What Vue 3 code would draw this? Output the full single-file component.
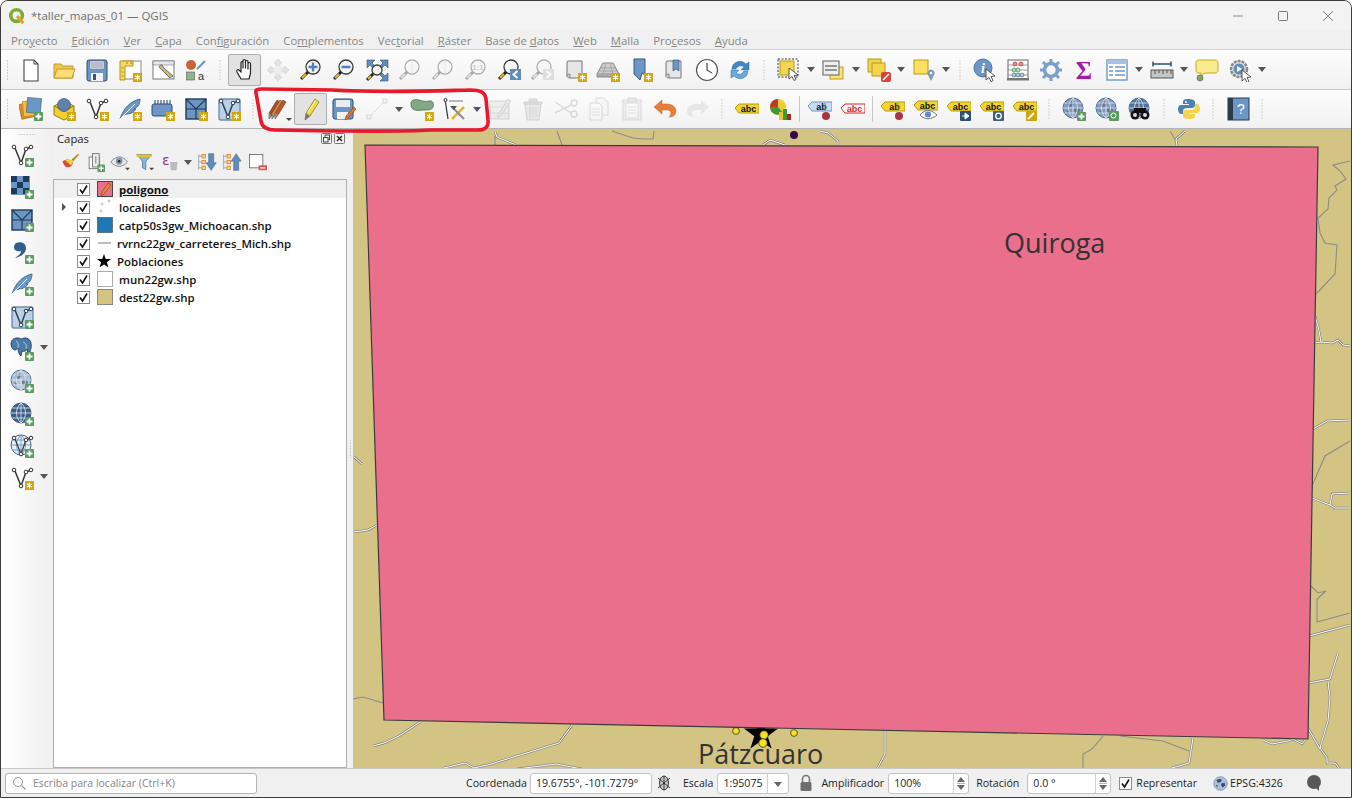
<script setup>
const plus = '<rect x="15" y="15" width="9" height="9" rx="1" fill="#5b9b60"/><path d="M19.5 16.5v6M16.5 19.5h6" stroke="#fff" stroke-width="1.8"/>'
const star = '<rect x="15" y="15" width="9" height="9" fill="#d2a60e"/><path d="M19.5 16.5v6M17 18l5 3M22 18l-5 3" stroke="#fff" stroke-width="1.1"/>'
const glass = (inner = '') => `<circle cx="14" cy="9" r="7" fill="#f5f5f5" stroke="#3a3a3a" stroke-width="1.3"/><path d="M9 14L2 21" stroke="#222" stroke-width="3"/><path d="M7 16l-4 4" stroke="#f0c020" stroke-width="1.8"/>${inner}`
const vee = (c = '#333') => `<path d="M5 5l6 15 5-14 5-2" fill="none" stroke="${c}" stroke-width="1.5"/><circle cx="4" cy="4" r="1.8" fill="#fff" stroke="${c}"/><circle cx="11" cy="20" r="1.8" fill="#fff" stroke="${c}"/><circle cx="16" cy="6" r="1.8" fill="#fff" stroke="${c}"/><circle cx="21" cy="4" r="1.8" fill="#fff" stroke="${c}"/>`
const feather = '<path d="M2 22C5 12 12 4 22 2c0 6-3 9-6 10l2 0c-2 3-5 5-9 5l-3 1z" fill="#6a98c8" stroke="#3c5f86" stroke-width=".8"/><path d="M2 22L17 7" stroke="#fff" stroke-width=".9"/>'
const mesh = '<rect x="2" y="2" width="20" height="20" fill="#6d95c2" stroke="#203a57" stroke-width="1.4"/><path d="M2 2l10 10L22 2M2 12h20M12 12v10" stroke="#203a57" stroke-width="1.2" fill="none"/>'
const vmesh = '<rect x="2" y="2" width="21" height="21" rx="2" fill="#bcd0e6" stroke="#6d8fb3" stroke-width="1.4"/>' + vee('#2c3e50')
const globe = (fill = '#7a9cc6', line = '#fff') => `<circle cx="11" cy="11" r="10" fill="${fill}" stroke="#445e7e"/><path d="M1 11h20M2.5 6h17M2.5 16h17M11 1v20M11 1c-6 5-6 15 0 20M11 1c6 5 6 15 0 20" fill="none" stroke="${line}" stroke-width=".9"/>`
const worldGlobe = '<circle cx="11" cy="11" r="10" fill="#a9c0dc" stroke="#6c89ac"/><path d="M5 6l5-2 3 2-2 3-4 1zM12 11l5-1 1 4-4 3-2-3zM4 13l3 1-1 3z" fill="#3e4d60"/>'
const gridGlobe = (fill) => `<circle cx="11" cy="11" r="10" fill="${fill}" stroke="#55708f"/><path d="M5 6l5-2 3 2-2 3-4 1zM12 11l5-1 1 4-4 3-2-3zM4 13l3 1-1 3z" fill="#667" opacity=".75"/><path d="M1 11h20M2.5 6h17M2.5 16h17M11 1v20M11 1c-6 5-6 15 0 20M11 1c6 5 6 15 0 20" fill="none" stroke="#dfe7f0" stroke-width=".8"/>`
const scroll = '<path d="M5 3h14v17H7c-2 0-3-1-3-2V4z" fill="#e6e6e6" stroke="#777"/><path d="M4 18c0-2 2-2 3-2h0v4" fill="#ccc" stroke="#777" stroke-width=".8"/>'
const abc = (c = '#f2d531', s = '#b99a0c', t = 'abc', tc = '#111') => `<path d="M0 7l4-4h20v9H4z" fill="${c}" stroke="${s}"/><text x="13.5" y="10.8" font-family="Liberation Sans" font-size="9" font-weight="700" text-anchor="middle" fill="${tc}">${t}</text>`
const labelTool = (corner) => `<g transform="translate(0 2)">${abc()}</g>${corner}`
const cursor = (x, y) => `<path transform="translate(${x} ${y})" d="M0 0l0 11 3-2.5 2 4 2-1-2-4 4-.5z" fill="#fff" stroke="#333" stroke-width=".8"/>`
const bigV = vee()
const handPath = '<path d="M8 21l-4-7c-1-2 1-3 2-2l2 2V5c0-2 2-2 2 0v5V3c0-2 2.500-2 2.500 0v7V4c0-2 2.500-2 2.500 0v7V6c0-2 2.500-2 2.500 0v9l-1.500 6z" fill="#fff" stroke="#222" stroke-width="1.200" stroke-linejoin="round"/>'
const fanPencil = (dx, c) => `<g transform="translate(${dx} 0)"><path d="M2 22l0-6L10 3l3 2-8 13z" fill="${c}" stroke="#5c3a24" stroke-width=".6"/><path d="M2 22l0-6 3 2z" fill="#8a8a8a"/></g>`

const icons = {
  new: '<path d="M5 2h10l4 4v17H5z" fill="#fff" stroke="#444" stroke-width="1.100"/><path d="M15 2v4h4" fill="none" stroke="#444"/>',
  open: '<path d="M2 6h7l2 2h10v12H2z" fill="#f0c54c" stroke="#c39a2b"/><path d="M2 20l3-9h18l-3 9z" fill="#fbdc76" stroke="#c39a2b"/>',
  save: '<rect x="2" y="2" width="20" height="21" rx="2" fill="#6c96c5" stroke="#2f4c6e"/><rect x="5" y="3" width="14" height="8" fill="#e8edf3" stroke="#5a6f88" stroke-width=".5"/><path d="M6 5h12M6 7h12M6 9h12" stroke="#667" stroke-width=".7"/><rect x="6" y="15" width="12" height="8" fill="#f2f2f2"/><rect x="8" y="16" width="3" height="6" fill="#3b5777"/>',
  template: '<rect x="5" y="3" width="18" height="18" fill="#fff" stroke="#888"/><path d="M2 3h13v5H7v14H2z" fill="#f4d866" stroke="#b3950f"/><path d="M3.500 10h2M3.500 14h2M3.500 18h2M9 4v2M13 4v2" stroke="#8a7208" stroke-width=".8"/>' + star,
  props: '<rect x="2" y="3" width="21" height="18" fill="#fff" stroke="#777"/><path d="M2 3h21v4H2z" fill="#dfe7f0" stroke="#777" stroke-width=".6"/><path d="M8 9l3 3 8 8 3-2-9-8-2-3c-2 0-3 1-3 2z" fill="#c9b878" stroke="#555" stroke-width=".8"/>',
  style: '<circle cx="7" cy="7" r="5" fill="#c8643a"/><path d="M13 11L21 3" stroke="#6d95c2" stroke-width="2"/><rect x="2.500" y="14" width="8" height="8" fill="#8eb58e" stroke="#555" stroke-width=".6"/><text x="17" y="22" font-family="Liberation Sans" font-size="11" fill="#333" text-anchor="middle">a</text>',
  hand: handPath,
  pan: '<path d="M12 1l4 4h-2v4h-4V5H8zM12 23l-4-4h2v-4h4v4h2zM1 12l4-4v2h4v4H5v2zM23 12l-4 4v-2h-4v-4h4V8z" fill="#bcc8d4" stroke="#888" stroke-width=".6"/><rect x="8" y="8" width="8" height="8" fill="#e0e0e0"/>',
  zoomIn: glass('<path d="M9.500 9h9M14 4.500v9" stroke="#4f81bd" stroke-width="2.400"/>'),
  zoomOut: glass('<path d="M9.500 9h9" stroke="#4f81bd" stroke-width="2.400"/>'),
  zoomFull: '<path d="M2 2h8L7 5l3 3-2 2-3-3-3 3zM23 2h-8l3 3-3 3 2 2 3-3 3 3zM23 23h-8l3-3-3-3 2-2 3 3 3-3zM5 18L8 15" fill="#5f8dbd" stroke="#34567a" stroke-width=".6"/>' + glass('').replace('cx="14" cy="9" r="7"', 'cx="12" cy="12" r="5"').replace('M9 14L2 21', 'M8 16L2 22').replace('M7 16l-4 4', 'M6 18l-3 3'),
  zoomFade: glass('<path d="M14 2v14" stroke="#ccc"/>'),
  zoomNative: glass('<text x="14" y="12" font-family="Liberation Sans" font-size="8" font-weight="700" fill="#777" text-anchor="middle">1:1</text>'),
  zoomLast: glass() + '<rect x="13" y="11" width="11" height="11" fill="#5f8dbd"/><path d="M20.500 13l-4 3.500 4 3.500" fill="none" stroke="#fff" stroke-width="2"/>',
  zoomNext: glass() + '<rect x="13" y="11" width="11" height="11" fill="#bbb"/><path d="M16.500 13l4 3.500-4 3.500" fill="none" stroke="#fff" stroke-width="2"/>',
  newMap: scroll + star,
  map3d: '<path d="M7 5h10l6 11H1z" fill="#ccc" stroke="#888"/><path d="M5 10h15M3 13h18M10 5l-3 11M14 5l3 11" stroke="#999" stroke-width=".7"/><path d="M1 16v3h22v-3" fill="#aaa" stroke="#888"/>' + star,
  newBook: '<path d="M5 1h11v16l-3-2-2 7-6-6z" fill="#6c96c5" stroke="#39597c"/>' + star,
  showBook: scroll + '<path d="M11 2h6v11l-3-2-3 2z" fill="#6c96c5" stroke="#39597c" stroke-width=".7"/>',
  clock: '<circle cx="12" cy="12" r="10.500" fill="#fff" stroke="#555" stroke-width="1.200"/><path d="M12 5v7l5 3" fill="none" stroke="#555" stroke-width="1.300"/>',
  refresh: '<path d="M4 11a8 8 0 0 1 14-5l3-2v8h-8l3-3a5 5 0 0 0-8 2z" fill="#3f88c9" stroke="#2a6a9f" stroke-width=".5"/><path d="M20 13a8 8 0 0 1-14 5l-3 2v-8h8l-3 3a5 5 0 0 0 8-2z" fill="#6ca9dc" stroke="#2a6a9f" stroke-width=".5"/>',
  select: '<rect x="1" y="1" width="20" height="18" fill="none" stroke="#333" stroke-dasharray="2 1.500"/><rect x="3" y="3" width="14" height="14" fill="#f4d64e" stroke="#b79a10"/>' + cursor(12, 10),
  selValues: '<rect x="8" y="9" width="13" height="12" fill="#f9e27a" stroke="#bb9e1c"/><rect x="1" y="3" width="16" height="14" fill="#eee" stroke="#777" stroke-width="1.200"/><path d="M3 8h12M3 12h12" stroke="#777" stroke-width="1.300"/>',
  deselect: '<rect x="1" y="1" width="13" height="13" fill="#f4d64e" stroke="#b79a10"/><rect x="5" y="5" width="13" height="13" fill="#f4d64e" stroke="#b79a10"/><rect x="14" y="14" width="10" height="10" rx="2" fill="#d8433d"/><path d="M16 22l6-6" stroke="#fff" stroke-width="1.500"/>',
  selLoc: '<rect x="2" y="2" width="14" height="14" fill="#fbe25c" stroke="#b79a10"/><path d="M19 23l-3-6a3.500 3.500 0 1 1 6 0z" fill="#7e9eb3"/><circle cx="19" cy="15" r="1.200" fill="#fff"/>',
  identify: '<circle cx="10" cy="10" r="9" fill="#6c96c5" stroke="#4e759f"/><text x="10" y="15" font-family="Liberation Serif" font-size="14" font-weight="700" font-style="italic" fill="#fff" text-anchor="middle">i</text>' + cursor(13, 11),
  abacus: '<rect x="2" y="2" width="20" height="19" fill="#fff" stroke="#666"/><path d="M2 7h20M2 12h20M2 17h20" stroke="#888" stroke-width=".8"/><rect x="1" y="20" width="22" height="2.500" fill="#777"/><g fill="#e88" stroke="#b33" stroke-width=".7"><circle cx="9" cy="6" r="2"/><circle cx="15" cy="6" r="2"/></g><g fill="#ade0ad" stroke="#484" stroke-width=".7"><circle cx="8" cy="12" r="2"/><circle cx="12" cy="12" r="2"/></g><g fill="#bcd" stroke="#468" stroke-width=".7"><circle cx="8" cy="17" r="2"/><circle cx="12" cy="17" r="2"/><circle cx="16" cy="17" r="2"/></g>',
  gear: '<circle cx="12" cy="12" r="6.500" fill="none" stroke="#7ba0cc" stroke-width="3.600"/><path d="M12 1v5M12 18v5M1 12h5M18 12h5M4 4l4 4M16 16l4 4M20 4l-4 4M8 16l-4 4" stroke="#7ba0cc" stroke-width="3"/>',
  sigma: '<text x="12" y="20.500" font-family="Liberation Serif" font-size="25" font-weight="700" fill="#a21aa5" text-anchor="middle">Σ</text>',
  table: '<rect x="2" y="2" width="20" height="20" fill="#fff" stroke="#6c96c5" stroke-width="1.400"/><rect x="2" y="2" width="20" height="4" fill="#a8c3e2"/><path d="M4 9h4M10 9h10M4 13h4M10 13h10M4 17h4M10 17h10" stroke="#6c96c5" stroke-width="1.500"/>',
  ruler: '<path d="M3 6h18M3 3.500v5M21 3.500v5" stroke="#2d4f73" stroke-width="1.500" fill="none"/><rect x="1" y="12" width="22" height="8" fill="#c4c4c4" stroke="#555"/><path d="M5 12v4M9 12v3M13 12v4M17 12v3M21 12v4" stroke="#555"/>',
  callout: '<path d="M4 2h16c2 0 3 1 3 3v7c0 2-1 3-3 3H10l-4 3v-3H4c-2 0-3-1-3-3V5c0-2 1-3 3-3z" fill="#fbe98f" stroke="#c9a916"/><circle cx="5" cy="20" r="3" fill="#7ea860" stroke="#555" stroke-width=".6"/>',
  gearPlay: '<circle cx="11" cy="11" r="8" fill="#ddd" stroke="#888" stroke-dasharray="3 1" stroke-width="2.500"/><circle cx="11" cy="11" r="5.500" fill="#5f8dbd"/><path d="M9 8l5 3-5 3z" fill="#fff"/>' + cursor(14, 12),

  dataSource: '<rect x="1" y="6" width="14" height="15" fill="#e0862f" transform="rotate(-12 8 13)" stroke="#a35c14" stroke-width=".6"/><rect x="4" y="4" width="14" height="15" fill="#f1c232" transform="rotate(-5 10 11)" stroke="#b08a12" stroke-width=".6"/><rect x="8" y="1" width="14" height="15" fill="#6c96c5" transform="rotate(5 15 8)" stroke="#3c5f86" stroke-width=".6"/>' + plus,
  newGeo: '<path d="M2 9l10-5 10 5v9l-10 5-10-5z" fill="#f2cf2f" stroke="#8e7a10"/><path d="M2 9l10 5 10-5" fill="none" stroke="#8e7a10"/><circle cx="12" cy="8" r="6.500" fill="#5f82ad" stroke="#2e4768" stroke-width=".6"/>' + star,
  newVec: bigV + star,
  newFeather: feather + star,
  chip: '<rect x="1" y="7" width="20" height="12" rx="2" fill="#6c96c5" stroke="#2f4c6e"/><path d="M4 3v4M7 3v4M10 3v4M13 3v4M16 3v4M19 3v4" stroke="#2f4c6e" stroke-width="1.100"/>' + star,
  newMesh: mesh + star,
  newVmesh: vmesh + star,
  pencils: fanPencil(1, '#a8502e') + fanPencil(4, '#e08a3a') + fanPencil(7, '#c0552a'),
  pencil: '<path d="M6 23l1-7L16 2l4 3-9 14z" fill="#f0d848" stroke="#8e7d20" stroke-width=".8"/><path d="M6 23l1-7 4 3z" fill="#777"/><path d="M9 15l8-12" stroke="#fff6b0" stroke-width=".9"/>',
  saveEdits: '<rect x="1" y="2" width="20" height="20" rx="2" fill="#6c96c5" stroke="#2f4c6e"/><rect x="4" y="3" width="14" height="7" fill="#e8edf3"/><rect x="5" y="15" width="11" height="7" fill="#f2f2f2"/><path d="M13 23l1-4 8-9 2 2-8 9z" fill="#e0762a" stroke="#7a4214" stroke-width=".6"/>',
  digit: '<path d="M4 20L20 4" stroke="#888" stroke-dasharray="2 1.500"/><rect x="2" y="18" width="4" height="4" fill="#eee" stroke="#888" stroke-width=".7"/><rect x="18" y="2" width="4" height="4" fill="#eee" stroke="#888" stroke-width=".7"/>',
  shape: '<path d="M1 6c0-3 4-4 8-3s6 2 10 1 5 3 4 6-5 3-9 3-5 1-9 0-4-4-4-7z" fill="#83a886" stroke="#4d6e50" stroke-width=".8"/>' + star,
  vertex: '<path d="M2 2l3 20" stroke="#333" stroke-width="1.200"/><circle cx="2.500" cy="3" r="1.500" fill="#fff" stroke="#333"/><path d="M6 4h14" stroke="#777" stroke-width="1.200"/><path d="M9 22L21 10" stroke="#e8b52d" stroke-width="2.500"/><path d="M21 22L9 10" stroke="#8a8a8a" stroke-width="2"/><path d="M7 9l7 0-3 4z" fill="#555"/>',
  multi: '<rect x="2" y="4" width="19" height="18" fill="#ddd" stroke="#999"/><path d="M2 10h19M2 16h19" stroke="#aaa"/><path d="M9 20L20 2l3 2-11 16z" fill="#ccc" stroke="#999"/>',
  del: '<path d="M4 7h16l-2 16H6z" fill="#d8cfcf" stroke="#998"/><path d="M3 5h18v2H3zM8 2h8v3H8z" fill="#c4bcbc" stroke="#998"/><path d="M9 10v10M12 10v10M15 10v10" stroke="#a99"/>',
  cut: '<path d="M1 5l16 11M1 16L17 8" stroke="#aaa" stroke-width="1.500"/><circle cx="20" cy="6" r="3" fill="none" stroke="#aaa" stroke-width="1.500"/><circle cx="20" cy="17" r="3" fill="none" stroke="#aaa" stroke-width="1.500"/>',
  copy: '<path d="M9 1h8l4 4v13H9z" fill="#f2f2f2" stroke="#aaa"/><path d="M3 6h9l3 3v14H3z" fill="#f8f8f8" stroke="#aaa"/><path d="M5 12h8M5 15h8M5 18h8" stroke="#bbb"/>',
  paste: '<rect x="3" y="3" width="18" height="20" fill="#ddd" stroke="#aaa"/><rect x="6" y="6" width="12" height="15" fill="#fafafa" stroke="#bbb"/><path d="M8 10h8M8 13h8M8 16h8" stroke="#bbb"/><rect x="8" y="1" width="8" height="4" fill="#ccc" stroke="#aaa"/>',
  undo: '<path d="M9 3L1 10l8 7v-4h5c3 0 4 1.500 4 3s-1 3-2 4c5 0 7-3 7-6 0-4-4-7-9-7H9z" fill="#e57d3b" stroke="#c66322" stroke-width=".5"/>',
  redo: '<path d="M15 3l8 7-8 7v-4h-5c-3 0-4 1.500-4 3s1 3 2 4c-5 0-7-3-7-6 0-4 4-7 9-7h5z" fill="#cdcdcd"/>',
  label: '<g transform="translate(0 4)">' + abc() + '</g>',
  diagram: '<circle cx="10" cy="10" r="8" fill="#e8cf2e"/><path d="M10 10V2a8 8 0 0 0-8 8z" fill="#c0392b"/><path d="M10 10H2a8 8 0 0 0 13 6z" fill="#3c9a3c"/><rect x="11" y="15" width="4" height="8" fill="#f1c232"/><rect x="15" y="12" width="4" height="11" fill="#3c9a3c"/><rect x="19" y="17" width="4" height="6" fill="#a52a22"/>',
  abPin: '<g transform="translate(0 2)">' + abc('#c7dcf2', '#6c96c5', 'ab') + '</g><path d="M17 6v8" stroke="#888"/><circle cx="18" cy="19" r="4" fill="#a93442"/>',
  abcRed: '<g transform="translate(0 4)">' + abc('#fff', '#e01f26', 'abc', '#e01f26') + '</g>',
  abPinY: '<g transform="translate(0 2)">' + abc('#f2d531', '#b99a0c', 'ab') + '</g><path d="M17 6v8" stroke="#888"/><circle cx="18" cy="19" r="4" fill="#a93442"/>',
  abcEye: '<g transform="translate(0 1)">' + abc() + '</g><path d="M6 18c5-6 11-6 17 0-6 5-12 5-17 0z" fill="#fff" stroke="#555" stroke-width=".8"/><circle cx="14" cy="17.500" r="3" fill="#5d8dc7"/>',
  abcMove: labelTool('<rect x="13" y="14" width="11" height="10" rx="1" fill="#2d4f73"/><path d="M15 19h4M18 16l4 3-4 3z" fill="#fff" stroke="#fff"/>'),
  abcRotate: labelTool('<rect x="13" y="14" width="11" height="10" rx="1" fill="#3f5f7a"/><circle cx="18.500" cy="19" r="2.800" fill="none" stroke="#fff" stroke-width="1.300"/>'),
  abcEdit: labelTool('<rect x="13" y="14" width="11" height="10" rx="1" fill="#d2a60e"/><path d="M15 22l6-6" stroke="#fff" stroke-width="2"/>'),
  globeAdd: gridGlobe('#7f9cc2') + plus,
  globeFind: gridGlobe('#7f9cc2') + '<rect x="14" y="14" width="10" height="10" rx="1" fill="#5b9b60"/><circle cx="18.500" cy="18.500" r="2.500" fill="none" stroke="#fff"/>',
  globeBino: gridGlobe('#4f74a3') + '<circle cx="7" cy="18" r="4.500" fill="#111"/><circle cx="17" cy="18" r="4.500" fill="#111"/><rect x="6" y="11" width="12" height="5" fill="#111"/><circle cx="7" cy="18" r="2" fill="#ddd"/><circle cx="17" cy="18" r="2" fill="#ddd"/>',
  python: '<path d="M11 2c-4 0-5 1-5 3v2h6v1H4c-2 0-3 2-3 4s1 5 3 5h2v-3c0-2 2-3 4-3h5c2 0 3-1 3-3V5c0-2-3-3-7-3z" fill="#4b82b4"/><path d="M13 22c4 0 5-1 5-3v-2h-6v-1h8c2 0 3-2 3-4s-1-5-3-5h-2v3c0 2-2 3-4 3H9c-2 0-3 1-3 3v3c0 2 3 3 7 3z" fill="#f7d24d"/><circle cx="9" cy="5" r="1" fill="#fff"/>',
  help: '<rect x="2" y="1" width="21" height="22" fill="#6c96c5" stroke="#2a3b4c"/><rect x="2" y="1" width="5" height="22" fill="#2a3b4c"/><text x="15" y="17" font-family="Liberation Sans" font-size="14" fill="#fff" text-anchor="middle">?</text>',

  addVec: bigV + plus,
  addRaster: '<rect x="1" y="1" width="19" height="19" fill="#6c96c5"/><path d="M1 1h6v6H1zM13 1h6v6h-6zM7 7h6v6H7zM1 13h6v6H1zM13 13h6v6h-6z" fill="#1f3a5c"/>' + plus,
  addMesh: mesh + plus,
  addComma: '<path d="M6 3c5-2 10 0 10 5 0 6-6 9-11 10 3-2 6-4 6-7-3 1-7 0-7-4 0-2 1-3 2-4z" fill="#2f5f8a"/>' + plus,
  addFeather: feather + plus,
  addVmesh: vmesh + plus,
  elephant: '<path d="M7 1c-4 0-6 3-6 6s2 6 4 6c1 0 2-1 3-2 0 3 1 7 3 8l1-5c2 1 4 0 5-2l1 5c2 0 2-3 3-6 1-5-1-10-6-10-2 0-3 1-4 1-1-1-2-1-4-1z" fill="#4a7ba8" stroke="#1d3c5a" stroke-width=".9"/><path d="M6 4c2 1 3 3 2 7M13 5c3 1 4 4 3 7" fill="none" stroke="#d6e2ee" stroke-width=".7"/>' + plus,
  addWms: gridGlobe('#a9c0dc') + plus,
  addWmts: globe('#3c5d87', '#d8e2ee') + plus,
  addWfs: globe('#e8f0f8', '#6c96c5') + vee('#333').replace(/stroke-width="1.5"/, 'stroke-width="1.2"') + plus,
  vStar: bigV + star,

  brush: '<path d="M14 9l8-7 1 1-7 8z" fill="#b8860b"/><path d="M3 11c5-3 9-3 13 1-1 5-4 7-9 6-2-2-3-4-4-7z" fill="#d8483c"/><path d="M6 10c3-2 7-2 10 2-1 2-2 3-3 4z" fill="#f0cf30"/>',
  addGroup: '<rect x="5" y="6" width="12" height="14" fill="#fff" stroke="#666"/><rect x="9" y="2" width="8" height="16" fill="#eee" stroke="#666"/><path d="M13 5v9" stroke="#666"/>' + plus,
  eye: '<path d="M1 12c6-8 14-8 20 0-6 7-14 7-20 0z" fill="#e8e8e8" stroke="#777"/><circle cx="11" cy="11" r="4" fill="#7d95ad"/><circle cx="11" cy="11" r="1.500" fill="#222"/><path d="M18 19h6l-3 3z" fill="#444"/>',
  filter: '<path d="M2 3h18l-7 8v10l-4-2v-8z" fill="#89b7d8" stroke="#54799a"/><rect x="2" y="3" width="18" height="3" fill="#e6c32c"/><path d="M17 19h6l-3 3z" fill="#444"/>',
  epsilon: '<text x="7" y="16" font-family="DejaVu Sans" font-size="17" fill="#8a3f8c" text-anchor="middle">ε</text><path d="M12 12h9l-1 10h-7z" fill="#bbb"/>',
  expand: '<path d="M2 3v18M2 5h5M2 12h5M2 19h5" stroke="#999" fill="none"/><rect x="6" y="3" width="4" height="4" fill="#f6d9a0" stroke="#d67e27"/><rect x="6" y="10" width="4" height="4" fill="#f6d9a0" stroke="#d67e27"/><rect x="6" y="17" width="4" height="4" fill="#f6d9a0" stroke="#d67e27"/><path d="M14 2h6v11h3l-6 9-6-9h3z" fill="#5f8dbd" stroke="#34567a" stroke-width=".6"/>',
  collapse: '<path d="M2 3v18M2 5h5M2 12h5M2 19h5" stroke="#999" fill="none"/><rect x="6" y="3" width="4" height="4" fill="#f6d9a0" stroke="#d67e27"/><rect x="6" y="10" width="4" height="4" fill="#f6d9a0" stroke="#d67e27"/><rect x="6" y="17" width="4" height="4" fill="#f6d9a0" stroke="#d67e27"/><path d="M14 22h6V11h3L17 2l-6 9h3z" fill="#5f8dbd" stroke="#34567a" stroke-width=".6"/>',
  remove: '<rect x="3" y="3" width="16" height="16" fill="#fff" stroke="#666"/><rect x="14" y="16" width="10" height="6" rx="1" fill="#d9534f"/><path d="M16 19h6" stroke="#fff" stroke-width="1.500"/>',
}

// | handle, > drop arrow, sep divider, ~ disabled, * checked
const parse = (s) => s.trim().split(/\s+/).map((t) => {
  if (t === '|') return { kind: 'handle' }
  if (t === '>') return { kind: 'arrow' }
  if (t === 'sep') return { kind: 'sep' }
  const off = t[0] === '~'
  const on = t[0] === '*'
  return { kind: 'btn', off, on, name: off || on ? t.slice(1) : t }
})

const row1 = parse('| new open save template props style | *hand ~pan zoomIn zoomOut zoomFull ~zoomFade ~zoomFade ~zoomNative zoomLast ~zoomNext newMap map3d newBook showBook clock refresh | select > selValues > deselect > selLoc > | identify abacus gear sigma table > ruler > callout gearPlay >')
const row2 = parse('| dataSource newGeo newVec newFeather chip newMesh newVmesh | pencils *pencil saveEdits ~digit > shape vertex > ~multi ~del ~cut ~copy ~paste undo ~redo | label diagram sep abPin abcRed sep abPinY abcEye abcMove abcRotate abcEdit | globeAdd globeFind globeBino | python | help |')
const leftBar = ['addVec', 'addRaster', 'addMesh', 'addComma', 'addFeather', 'addVmesh', 'elephant', 'addWms', 'addWmts', 'addWfs', 'vStar']
const panelTools = parse('brush addGroup eye filter epsilon > expand collapse remove')

const menus = [
  ['Pro', 'y', 'ecto'], ['', 'E', 'dición'], ['', 'V', 'er'], ['', 'C', 'apa'], ['Con', 'f', 'iguración'],
  ['Co', 'm', 'plementos'], ['Vec', 't', 'orial'], ['', 'R', 'áster'], ['Base de ', 'd', 'atos'],
  ['', 'W', 'eb'], ['', 'M', 'alla'], ['Pro', 'c', 'esos'], ['', 'A', 'yuda'],
]

const layers = [
  { name: 'poligono', swatch: 'edit', current: true },
  { name: 'localidades', swatch: 'points', expand: true },
  { name: 'catp50s3gw_Michoacan.shp', swatch: 'blue' },
  { name: 'rvrnc22gw_carreteres_Mich.shp', swatch: 'line', narrow: true },
  { name: 'Poblaciones', swatch: 'star', narrow: true },
  { name: 'mun22gw.shp', swatch: 'white' },
  { name: 'dest22gw.shp', swatch: 'sand' },
]

const roads = [
  'M495 131l2 5 19 8', 'M763 144l7-5 15 5', 'M820 130l8 2 10 8v4', 'M1185 130l-9 8 1 7',
  'M1315 315l3 10 3 16-6 1M1321 341l11 1 6-3 5 5 7 1', 'M1313 428l14-8 23-1', 'M1312 497l18 7 5 3h15M1330 504l2-11 18-1',
  'M1309 635l41-11', 'M1338 652l-8 26-22 4M1328 680l2 17-2 23-8 27 7 10v5h8l5 6', 'M1308 727l12 21',
  'M1263 739l9 4 16-3 5-2 9 5 3-4', 'M885 730v23l-8 15', 'M1193 737l-4 25-17 5',
  'M420 721l-21 14-15 7-11 3', 'M572 724l-13 18-68 21-17 4-9-5-21 5', 'M517 768l39-5 26 5',
  'M354 456l8 7', 'M354 531l14-2 9-5',
]
const borders = [
  'M495 135v9', 'M557 130l5 14', 'M612 130l21 7 10 1h10l1-8', 'M1170 130l7 12',
  'M1350 160l-17 4 7 6 6 8-11 7 2 4-8 8-1 11-10 9 2 15 5 10 12 2-2 29-19 20', 'M1312 485l13-30 25-15',
  'M1311 585l7 7 8-2-9 8v23l33-9', 'M1103 735l-11 13-9 5v15', 'M1120 735l43 5 26 10', 'M353 698l10-2 20 6',
]
</script>

<template>
  <div class="window">
    <header class="titlebar">
      <svg class="logo" viewBox="0 0 20 20" width="18" height="18">
        <circle cx="9.500" cy="9.500" r="6.500" fill="none" stroke="#7bae35" stroke-width="4"/>
        <path d="M10 10l7 8" stroke="#e2a32b" stroke-width="3.500"/>
      </svg>
      <span class="title">*taller_mapas_01 — QGIS</span>
      <div class="winctl">
        <svg viewBox="0 0 12 12" width="12" height="12"><path d="M1 6h10" stroke="#888"/></svg>
        <svg viewBox="0 0 12 12" width="12" height="12"><rect x="1.500" y="1.500" width="9" height="9" rx="1" fill="none" stroke="#777"/></svg>
        <svg viewBox="0 0 12 12" width="12" height="12"><path d="M1 1l10 10M11 1L1 11" stroke="#888"/></svg>
      </div>
    </header>

    <nav class="menubar">
      <span v-for="m in menus" :key="m[1] + m[2]">{{ m[0] }}<u>{{ m[1] }}</u>{{ m[2] }}</span>
    </nav>

    <div v-for="(row, r) in [row1, row2]" :key="r" class="toolbar" :class="'row' + r">
      <template v-for="(t, i) in row" :key="i">
        <span v-if="t.kind === 'handle'" class="handle"></span>
        <span v-else-if="t.kind === 'arrow'" class="arrow"></span>
        <span v-else-if="t.kind === 'sep'" class="sep"></span>
        <span v-else class="tool" :class="{ on: t.on, off: t.off }">
          <svg viewBox="0 0 24 24" width="24" height="24" v-html="icons[t.name]"></svg>
          <i v-if="t.name === 'pencils'" class="mini"></i>
        </span>
      </template>
    </div>

    <main class="workspace">
      <aside class="leftbar">
        <span class="handle flat"></span>
        <span v-for="n in leftBar" :key="n" class="lefttool">
          <svg viewBox="0 0 24 24" width="24" height="24" v-html="icons[n]"></svg>
          <span v-if="n === 'elephant' || n === 'vStar'" class="arrow side"></span>
        </span>
      </aside>

      <section class="panel">
        <div class="panelhead">
          <span>Capas</span>
          <div class="dockbtns">
            <svg viewBox="0 0 11 11" width="11" height="11"><rect x=".5" y=".5" width="10" height="10" rx="1" fill="#f4f4f4" stroke="#777"/><rect x="4" y="2" width="4.500" height="4.500" fill="none" stroke="#444"/><rect x="2.500" y="4.500" width="4.500" height="4.500" fill="#f4f4f4" stroke="#444"/></svg>
            <svg viewBox="0 0 11 11" width="11" height="11"><rect x=".5" y=".5" width="10" height="10" rx="1" fill="#f4f4f4" stroke="#777"/><path d="M3 3l5 5M8 3L3 8" stroke="#222" stroke-width="1.400"/></svg>
          </div>
        </div>
        <div class="paneltools">
          <template v-for="(t, i) in panelTools" :key="i">
            <span v-if="t.kind === 'arrow'" class="arrow"></span>
            <span v-else class="ptool"><svg viewBox="0 0 24 24" width="20" height="20" v-html="icons[t.name]"></svg></span>
          </template>
        </div>
        <div class="tree">
          <div v-for="l in layers" :key="l.name" class="layer" :class="{ current: l.current, narrow: l.narrow }">
            <span class="twist" :class="{ shown: l.expand }"></span>
            <span class="check"><svg viewBox="0 0 13 13" width="13" height="13"><path d="M3 6.500l2.500 3.500L10 2.500" fill="none" stroke="#111" stroke-width="1.600"/></svg></span>
            <svg class="swatch" viewBox="0 0 16 16" width="16" height="16">
              <template v-if="l.swatch === 'edit'">
                <rect x=".5" y=".5" width="15" height="15" fill="#e96f8d" stroke="#444"/>
                <path d="M4 15l1-4 6-9 3 2-7 9z" fill="#e8883a" stroke="#7a4214" stroke-width=".6"/>
              </template>
              <template v-else-if="l.swatch === 'points'">
                <circle cx="12" cy="2" r="1" fill="#fff" stroke="#999" stroke-width=".6"/>
                <circle cx="5" cy="5" r="1" fill="#fff" stroke="#999" stroke-width=".6"/>
                <circle cx="4" cy="12" r="1" fill="#fff" stroke="#999" stroke-width=".6"/>
              </template>
              <rect v-else-if="l.swatch === 'blue'" x=".5" y=".5" width="15" height="15" fill="#1f78b4" stroke="#444" stroke-width=".6"/>
              <path v-else-if="l.swatch === 'line'" d="M1 8h13" stroke="#a8a8a8" stroke-width="1.500"/>
              <path v-else-if="l.swatch === 'star'" d="M7 1l1.800 4.900 5.200.2-4.100 3.200 1.400 5L7 11.400 2.700 14.300l1.400-5L0 6.100l5.200-.2z" fill="#000"/>
              <rect v-else-if="l.swatch === 'white'" x=".5" y=".5" width="15" height="15" fill="#fff" stroke="#aaa"/>
              <rect v-else x=".5" y=".5" width="15" height="15" fill="#d4c484" stroke="#888"/>
            </svg>
            <span class="lname">{{ l.name }}</span>
          </div>
        </div>
      </section>

      <div class="splitter"><span class="vdots"></span></div>

      <section class="map">
        <svg viewBox="353 128 998 640" width="998" height="640">
          <rect x="353" y="128" width="998" height="640" fill="#d4c484"/>
          <g fill="none">
            <path v-for="d in borders" :key="d" :d="d" stroke="#8c8c88" stroke-width="1.100"/>
            <path v-for="d in roads" :key="'o' + d" :d="d" stroke="#85857f" stroke-width="2.400"/>
            <path v-for="d in roads" :key="'i' + d" :d="d" stroke="#fff" stroke-width="1"/>
          </g>
          <circle cx="794" cy="134" r="4" fill="#37084d"/>
          <path d="M761 715l4.100 12.300 13 .1-10.400 7.800 3.900 12.400-10.600-7.600-10.600 7.600 3.900-12.400-10.400-7.800 13-.1z" fill="#000"/>
          <g fill="#f7e11c" stroke="#333" stroke-width=".8">
            <circle cx="736" cy="730" r="3.400"/>
            <circle cx="794" cy="732" r="3.400"/>
            <circle cx="764" cy="734" r="4.200"/>
            <circle cx="763" cy="742" r="4.200"/>
          </g>
          <polygon points="365,144 1318,146 1308,738 384,719" fill="#e96f8d" stroke="#3b3b3b" stroke-width="1.200"/>
          <text x="1004" y="252" class="place">Quiroga</text>
          <text x="698" y="763" class="place">Pátzcuaro</text>
        </svg>
      </section>
    </main>

    <footer class="statusbar">
      <div class="locator">
        <svg viewBox="0 0 14 14" width="14" height="14"><circle cx="6" cy="6" r="4.500" fill="none" stroke="#999"/><path d="M9.500 9.500l4 4" stroke="#999" stroke-width="1.200"/></svg>
        <span>Escriba para localizar (Ctrl+K)</span>
      </div>
      <span class="st coord-label">Coordenada</span>
      <span class="field coord">19.6755°, -101.7279°</span>
      <svg class="mouseicon" viewBox="0 0 14 18" width="14" height="18"><ellipse cx="7" cy="9" rx="4.500" ry="7" fill="#ccc" stroke="#333"/><path d="M1 4l12 10M13 4L1 14M7 2v14" stroke="#333"/></svg>
      <span class="st scale-label">Escala</span>
      <span class="field scale">1:95075<b class="combo"></b></span>
      <svg class="lock" viewBox="0 0 14 18" width="14" height="18"><path d="M3.500 8V5a3.500 3.500 0 0 1 7 0v3" fill="none" stroke="#777" stroke-width="1.600"/><rect x="1.500" y="8" width="11" height="9" rx="1.500" fill="#6e6e6e"/></svg>
      <span class="st mag-label">Amplificador</span>
      <span class="field spin">100%<b class="spinner"></b></span>
      <span class="st rot-label">Rotación</span>
      <span class="field spin rot">0.0 °<b class="spinner"></b></span>
      <span class="check render"><svg viewBox="0 0 13 13" width="13" height="13"><path d="M3 6.500l2.500 3.500L10 2.500" fill="none" stroke="#111" stroke-width="1.600"/></svg></span>
      <span class="st rep-label">Representar</span>
      <svg class="crsglobe" viewBox="0 0 22 22" width="15" height="15" v-html="worldGlobe"></svg>
      <span class="st">EPSG:4326</span>
      <svg class="bubble" viewBox="0 0 16 16" width="16" height="16"><circle cx="8" cy="7" r="7" fill="#585858"/><path d="M9 12l4 4v-6z" fill="#585858"/></svg>
    </footer>

    <svg class="annotation" viewBox="0 0 500 140" width="500" height="140">
      <path d="M256 93c-1-3 1-4 6-4l70 1c50 3 100 1 138 0 10 0 15 2 16 9l2 21c1 7-3 10-10 10H430c-30 2-100 1-155 0-9 0-13-3-14-9z" fill="none" stroke="#e8192c" stroke-width="3.600"/>
    </svg>
  </div>
</template>

<style scoped>
.window {
  position: relative;
  width: 1352px;
  height: 798px;
  box-sizing: border-box;
  border: 1px solid #3c3c3c;
  border-radius: 8px 8px 0 0;
  background: #f0f0f0;
  display: flex;
  flex-direction: column;
  overflow: hidden;
  font-family: "Open Sans", "Liberation Sans", sans-serif;
  font-size: 11px;
  color: #222;
}
.titlebar {
  height: 29px;
  background: #f3f3f3;
  display: flex;
  align-items: center;
  padding-left: 7px;
  flex: none;
}
.logo { flex: none; }
.title { margin-left: 5px; font-size: 11.5px; color: #6f6f6f; }
.winctl {
  margin-left: auto;
  display: flex;
  gap: 33px;
  padding-right: 17px;
}
.menubar {
  height: 20px;
  box-sizing: border-box;
  background: #f0f0f0;
  border-bottom: 1px solid #d6d6d6;
  display: flex;
  align-items: center;
  gap: 14px;
  padding: 2px 0 0 10px;
  color: #858585;
  font-size: 11.3px;
  flex: none;
}
.toolbar {
  display: flex;
  align-items: center;
  background: linear-gradient(#fdfdfd, #f1f1f1);
  flex: none;
}
.row0 { height: 39px; border-bottom: 1px solid #c8c8c8; }
.row1 { height: 38px; border-bottom: 1px solid #b4b4b4; }
.handle {
  width: 16px;
  height: 22px;
  flex: none;
  background: radial-gradient(circle, #aaa 0.7px, transparent 0.8px) center / 3px 3px;
  background-clip: content-box;
  padding: 0 6px;
  box-sizing: border-box;
}
.toolbar > .handle:first-child { width: 13px; padding: 0 4px; }
.handle.flat { width: 18px; height: 5px; padding: 0; margin: 3px auto 2px; }
.tool {
  width: 33px;
  height: 32px;
  flex: none;
  box-sizing: border-box;
  display: flex;
  align-items: center;
  justify-content: center;
  position: relative;
  border: 1px solid transparent;
  border-radius: 2px;
}
.tool.on { background: #e2e2e2; border-color: #adadad; }
.tool.off svg { opacity: 0.38; filter: grayscale(0.8); }
.mini {
  position: absolute;
  right: 1px;
  bottom: 3px;
  border: 3px solid transparent;
  border-top: 3px solid #444;
  border-bottom: 0;
}
.arrow {
  width: 12px;
  flex: none;
  height: 0;
  display: flex;
  justify-content: center;
  align-items: center;
}
.arrow::before {
  content: "";
  border-left: 4px solid transparent;
  border-right: 4px solid transparent;
  border-top: 5px solid #555;
}
.sep { width: 7px; height: 26px; flex: none; background: linear-gradient(#c8c8c8, #c8c8c8) center / 1px 100% no-repeat; }
.workspace { flex: 1; display: flex; min-height: 0; }
.leftbar {
  width: 52px;
  flex: none;
  background: linear-gradient(90deg, #ffffff, #efefef);
  display: flex;
  flex-direction: column;
  align-items: stretch;
}
.lefttool {
  height: 32.3px;
  display: flex;
  align-items: center;
  padding-left: 9px;
  position: relative;
}
.arrow.side { position: absolute; left: 37px; top: 15px; }
.panel {
  width: 295px;
  flex: none;
  display: flex;
  flex-direction: column;
  background: #f0f0f0;
}
.panelhead {
  height: 19px;
  display: flex;
  align-items: center;
  justify-content: space-between;
  padding: 0 3px 0 4px;
  color: #222;
  font-size: 11.3px;
  flex: none;
}
.dockbtns { display: flex; gap: 2px; }
.paneltools {
  height: 31px;
  display: flex;
  align-items: flex-start;
  padding: 2px 0 0 4px;
  box-sizing: border-box;
  flex: none;
}
.paneltools .arrow { height: 24px; }
.ptool { width: 25px; height: 24px; display: flex; align-items: center; justify-content: center; flex: none; }
.tree {
  flex: 1;
  background: #fff;
  border: 1px solid #b0b0b0;
  box-sizing: border-box;
  margin-right: 1px;
}
.layer {
  height: 18px;
  display: flex;
  align-items: center;
  font-size: 11.45px;
  font-weight: 600;
  color: #111;
}
.layer.current { background: #f0f0f0; }
.current .lname { text-decoration: underline; font-weight: 700; }
.twist {
  width: 23px;
  flex: none;
  box-sizing: border-box;
  padding-left: 8px;
  display: flex;
  align-items: center;
}
.twist.shown::before {
  content: "";
  border-left: 4px solid #555;
  border-top: 4px solid transparent;
  border-bottom: 4px solid transparent;
}
.check {
  width: 13px;
  height: 13px;
  box-sizing: border-box;
  flex: none;
  background: #fff;
  border: 1px solid #8c8c8c;
  display: flex;
  align-items: center;
  justify-content: center;
}
.check svg { flex: none; }
.swatch { margin-left: 7px; flex: none; }
.lname { margin-left: 6px; white-space: nowrap; }
.narrow .lname { margin-left: 4px; }
.splitter {
  width: 5px;
  flex: none;
  background: #f0f0f0;
  display: flex;
  align-items: center;
  justify-content: center;
}
.vdots {
  width: 3px;
  height: 18px;
  background: radial-gradient(circle, #aaa 0.7px, transparent 0.8px) center / 3px 3px;
}
.map { flex: 1; overflow: hidden; min-width: 0; }
.map svg { display: block; }
.place {
  font-family: "Open Sans", sans-serif;
  font-size: 27px;
  fill: #323232;
}
.statusbar {
  height: 29px;
  flex: none;
  background: #f0f0f0;
  display: flex;
  align-items: center;
  padding-left: 4px;
  border-top: 1px solid #c8c8c8;
  box-sizing: border-box;
  white-space: nowrap;
}
.locator {
  width: 252px;
  height: 21px;
  box-sizing: border-box;
  background: #fff;
  border: 1px solid #b4b4b4;
  border-radius: 3px;
  display: flex;
  align-items: center;
  padding-left: 6px;
  gap: 7px;
  color: #858585;
  font-size: 10.5px;
}
.st { font-size: 10.6px; color: #222; }
.coord-label { margin-left: 209px; }
.field {
  height: 21px;
  box-sizing: border-box;
  background: #fff;
  border: 1px solid #c4c4c4;
  border-radius: 3px;
  display: flex;
  align-items: center;
  padding-left: 5px;
  position: relative;
  font-size: 10.6px;
  margin-left: 4px;
}
.coord { width: 122px; margin-left: 3px; }
.mouseicon { margin-left: 5px; }
.scale-label { margin-left: 12px; }
.scale { width: 72px; }
.combo {
  position: absolute;
  right: 0;
  top: 0;
  bottom: 0;
  width: 20px;
  border-left: 1px solid #d0d0d0;
}
.combo::after {
  content: "";
  position: absolute;
  left: 6px;
  top: 8px;
  border-left: 4px solid transparent;
  border-right: 4px solid transparent;
  border-top: 5px solid #666;
}
.lock { margin-left: 10px; }
.mag-label { margin-left: 8px; }
.spin { width: 81px; }
.rot { margin-left: 8px; width: 84px; }
.rot-label { margin-left: 7px; }
.spinner {
  position: absolute;
  right: 0;
  top: 0;
  bottom: 0;
  width: 14px;
  border-left: 1px solid #d0d0d0;
  background:
    linear-gradient(#666, #666) 3px 9.500px / 8px 0.5px no-repeat;
}
.spinner::before, .spinner::after {
  content: "";
  position: absolute;
  left: 3px;
  border-left: 4px solid transparent;
  border-right: 4px solid transparent;
}
.spinner::before { top: 3px; border-bottom: 5px solid #666; }
.spinner::after { bottom: 3px; border-top: 5px solid #666; }
.render { margin-left: 8px; }
.rep-label { margin-left: 4px; }
.crsglobe { margin-left: 16px; margin-right: 2px; }
.bubble { margin-left: 23px; }
.annotation {
  position: absolute;
  left: -1px;
  top: -1px;
  pointer-events: none;
}
</style>
